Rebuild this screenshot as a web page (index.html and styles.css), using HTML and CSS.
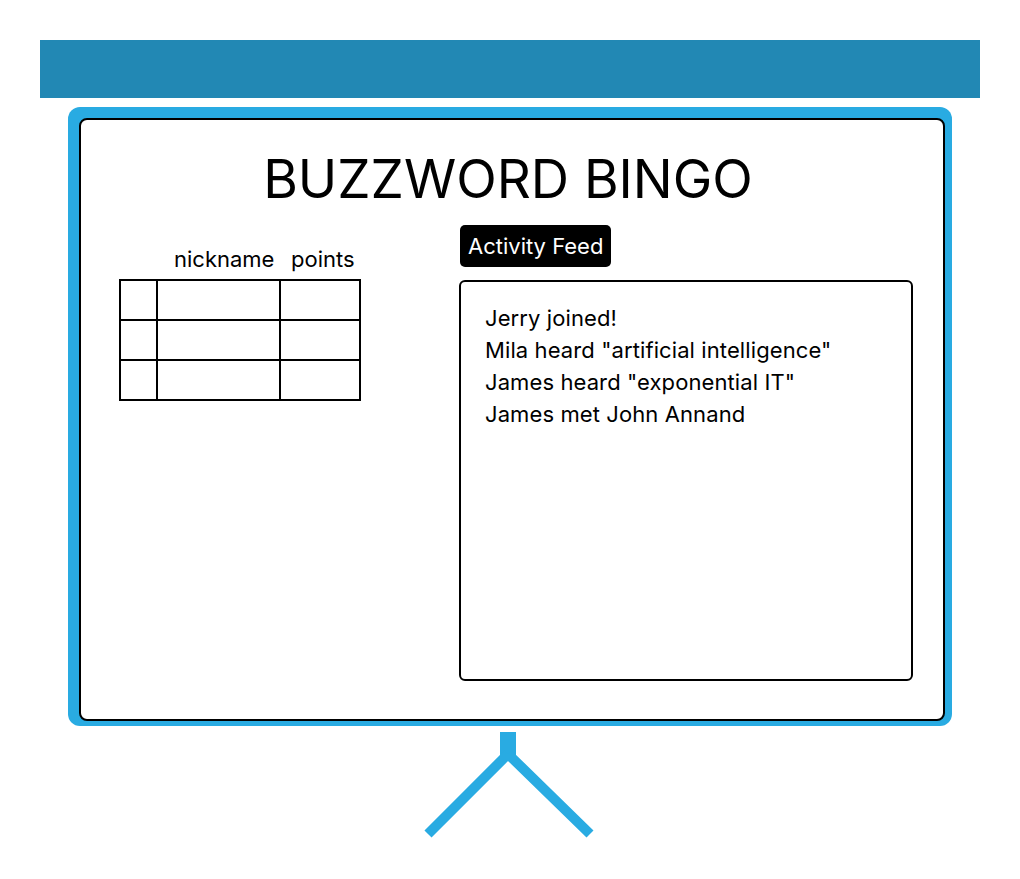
FILE: index.html
```html
<!DOCTYPE html>
<html lang="en">
<head>
    <meta charset="UTF-8">
    <meta name="viewport" content="width=device-width, initial-scale=1.0">
    <title>Buzzword Bingo</title>
    <link rel="stylesheet" href="styles.css">
</head>
<body>
    <div class="top-bar"></div>

    <div class="screen">
        <div class="screen-inner">
            <h1 class="title">BUZZWORD BINGO</h1>

            <div class="columns">
                <div class="scores">
                    <div class="score-head">
                        <span></span>
                        <span class="head-nick">nickname</span>
                        <span class="head-points">points</span>
                    </div>
                    <div class="score-grid">
                        <div></div><div></div><div></div>
                        <div></div><div></div><div></div>
                        <div></div><div></div><div></div>
                    </div>
                </div>

                <div class="feed">
                    <div class="feed-label">Activity Feed</div>
                    <div class="feed-box">
                        <div>Jerry joined!</div>
                        <div>Mila heard "artificial intelligence"</div>
                        <div>James heard "exponential IT"</div>
                        <div>James met John Annand</div>
                    </div>
                </div>
            </div>
        </div>
    </div>

    <svg class="stand" width="200" height="110" viewBox="0 0 200 110">
        <rect x="92" y="0" width="16" height="28" fill="#29abe2"/>
        <path d="M100 22 L20 102 M100 22 L182 102" stroke="#29abe2" stroke-width="10" fill="none"/>
    </svg>
</body>
</html>
```

FILE: styles.css
```css
body {
    margin: 0;
    padding: 40px 0 0;
    font-family: 'Inter', 'Liberation Sans', sans-serif;
    color: #000;
    background: #fff;
}
.top-bar {
    height: 58px;
    margin: 0 40px;
    background: #2288b4;
}
.screen {
    margin: 9px 68px 0;
    padding: 11px 7px 5px 11px;
    background: #29abe2;
    border-radius: 12px;
}
.screen-inner {
    height: 599px;
    border: 2px solid #000;
    border-radius: 8px;
    background: #fff;
}
.title {
    margin: 27px 0 0;
    padding-right: 8px;
    font-size: 53px;
    font-weight: 400;
    line-height: 64px;
    text-align: center;
}
.columns {
    display: flex;
    margin-top: 14px;
    padding: 0 30px 0 38px;
}
.scores {
    width: 340px;
    padding-top: 22px;
}
.score-head,
.score-grid {
    display: grid;
    grid-template-columns: 35px 121px 78px;
    gap: 2px;
    padding: 0 2px;
    width: 238px;
}
.score-head {
    height: 24px;
    margin-bottom: 8px;
    font-size: 22px;
    line-height: 24px;
    white-space: nowrap;
}
.head-nick {
    padding-left: 16px;
}
.head-points {
    padding-left: 10px;
}
.score-grid {
    grid-auto-rows: 38px;
    padding: 2px;
    background: #000;
}
.score-grid div {
    background: #fff;
}
.feed {
    flex: 1;
}
.feed-label {
    display: inline-block;
    height: 42px;
    padding: 0 8px;
    background: #000;
    color: #fff;
    border-radius: 5px;
    font-size: 22px;
    line-height: 42px;
    margin-left: 1px;
}
.feed-box {
    height: 353px;
    margin-top: 13px;
    padding: 20px 24px 24px;
    border: 2px solid #000;
    border-radius: 6px;
    font-size: 22px;
    line-height: 32px;
    letter-spacing: 0.1px;
}
.stand {
    display: block;
    margin: 6px auto 0;
    position: relative;
    left: -2px;
}
```
